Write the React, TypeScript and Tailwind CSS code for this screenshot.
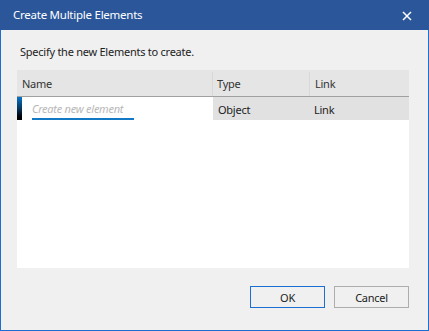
import React from "react";

export default function App() {
  return (
    <div
      className="w-[429px] h-[331px] flex flex-col text-[11px] tracking-[-0.25px]"
      style={{ fontFamily: '"Noto Sans", "Open Sans", sans-serif' }}
    >
      <div className="h-[30px] bg-[#2b579a] flex items-center justify-between pl-[13px] pr-[17px] text-white">
        <span className="text-[11.5px] leading-none">Create Multiple Elements</span>
        <svg width="10" height="10" viewBox="0 0 10 10" className="mt-[1px]">
          <path d="M1 1 L9 9 M9 1 L1 9" stroke="white" strokeWidth="1.5" />
        </svg>
      </div>
      <div className="flex-1 bg-[#f0f0f0] border-x border-b border-[#1a6fd0] flex flex-col pl-[16px] pr-[19px]">
        <div className="pt-[14px] pl-[3px] h-[40px] text-[#222] leading-[16px]">
          Specify the new Elements to create.
        </div>
        <div className="w-[392px] h-[198px] bg-white flex flex-col">
          <div className="h-[27px] bg-[#e5e5e5] border-b border-[#a0a0a0] flex text-[#333] pt-[2px]">
            <div className="w-[196px] flex items-center pl-[5px] border-r border-[#d8d8d8]">Name</div>
            <div className="w-[97px] flex items-center pl-[4px] border-r border-[#d8d8d8]">Type</div>
            <div className="flex-1 flex items-center pl-[5px]">Link</div>
          </div>
          <div className="h-[23px] flex text-[#222]">
            <div className="w-[196px] flex">
              <div className="w-[5px] h-full bg-gradient-to-b from-[#0a74c8] via-[#04385f] to-[#000000]" />
              <div className="ml-[10px] w-[102px] flex flex-col justify-between">
                <span className="italic text-[#b8b8b8] mt-[4px] leading-[15px] whitespace-nowrap">Create new element</span>
                <div className="h-[2px] bg-[#1479c4]" />
              </div>
            </div>
            <div className="w-[97px] bg-[#e1e1e1] flex items-center pl-[5px] pt-[3px]">Object</div>
            <div className="flex-1 bg-[#e1e1e1] flex items-center pl-[4px] pt-[3px]">Link</div>
          </div>
        </div>
        <div className="flex justify-end gap-[9px] mt-[18px]">
          <button className="w-[75px] h-[22px] border border-[#1a6fd0] bg-[#f0f0f0] text-[#222] leading-none">OK</button>
          <button className="w-[75px] h-[22px] border border-[#adadad] bg-[#f0f0f0] text-[#222] leading-none">Cancel</button>
        </div>
      </div>
    </div>
  );
}
